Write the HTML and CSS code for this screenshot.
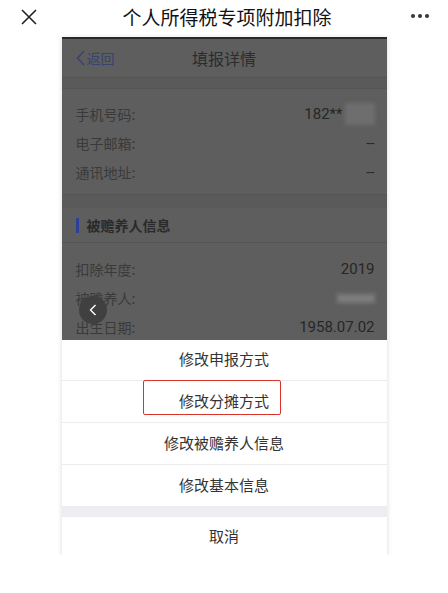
FILE: index.html
```html
<!doctype html>
<html lang="zh">
<head>
    <meta charset="UTF-8">
    <meta content="width=device-width, initial-scale=1" name="viewport">
    <title>个人所得税专项附加扣除</title>
    <link rel="stylesheet" href="styles.css">
</head>
<body>
<div class="topbar">
    <svg class="close-icon" width="16" height="16" viewBox="0 0 16 16">
        <path d="M1 1 L15 15 M15 1 L1 15" stroke="#222" stroke-width="1.6" fill="none"/>
    </svg>
    <div class="topbar-title">个人所得税专项附加扣除</div>
    <div class="more"><span></span><span></span><span></span></div>
</div>

<div class="shot">
    <div class="screen">
        <div class="nav">
            <div class="back">
                <svg width="9" height="16" viewBox="0 0 9 16">
                    <path d="M8 1 L1.5 8 L8 15" stroke="#37446f" stroke-width="1.6" fill="none"/>
                </svg>返回
            </div>
            <div class="nav-title">填报详情</div>
        </div>
        <div class="band"></div>
        <div class="rows first">
            <div class="row"><span>手机号码:</span><span class="val">182**<i class="blur phone"></i></span></div>
            <div class="row"><span>电子邮箱:</span><span class="val">--</span></div>
            <div class="row"><span>通讯地址:</span><span class="val">--</span></div>
        </div>
        <div class="gap"></div>
        <div class="section-head"><b class="mark"></b>被赡养人信息</div>
        <div class="rows">
            <div class="row"><span>扣除年度:</span><span class="val">2019</span></div>
            <div class="row"><span>被赡养人:</span><span class="val"><i class="blur name"></i></span></div>
            <div class="row"><span>出生日期:</span><span class="val">1958.07.02</span></div>
        </div>
        <div class="float-back">
            <svg width="8" height="12" viewBox="0 0 8 12">
                <path d="M6.5 1 L1.5 6 L6.5 11" stroke="#fff" stroke-width="1.4" fill="none"/>
            </svg>
        </div>
    </div>
    <div class="sheet">
        <div class="sheet-item">修改申报方式</div>
        <div class="sheet-item">修改分摊方式</div>
        <div class="sheet-item">修改被赡养人信息</div>
        <div class="sheet-item">修改基本信息</div>
        <div class="sheet-gap"></div>
        <div class="sheet-item cancel">取消</div>
        <div class="mark-box"></div>
    </div>
</div>
</body>
</html>
```

FILE: styles.css
```css
body {
    margin: 0;
    background: #fff;
    font-family: "Noto Sans CJK SC", "Noto Sans", sans-serif;
    color: #222;
}

.topbar {
    height: 37px;
    display: flex;
    align-items: center;
    justify-content: space-between;
    padding: 0 19px 0 21px;
    box-sizing: border-box;
}

.close-icon {
    margin-top: -3px;
}

.topbar-title {
    font-size: 19px;
    color: #111;
    margin-top: -5px;
    margin-left: 6px;
}

.more {
    display: flex;
    gap: 3px;
    margin-top: -5px;
}

.more span {
    width: 4px;
    height: 4px;
    border-radius: 50%;
    background: #333;
}

.shot {
    width: 325px;
    margin: 0 auto;
    box-shadow: 0 1px 5px rgba(0, 0, 0, 0.15);
}

.screen {
    position: relative;
    height: 303px;
    overflow: hidden;
    background: #5e5e5e;
    border-top: 2px solid #2a2a2a;
    box-sizing: border-box;
    color: #333;
    font-size: 14px;
}

.nav {
    height: 39px;
    display: flex;
    align-items: center;
    position: relative;
    border-bottom: 1px solid #545454;
    box-sizing: border-box;
}

.back {
    display: flex;
    align-items: center;
    gap: 2px;
    padding-left: 14px;
    color: #37446f;
    font-size: 14px;
}

.nav-title {
    position: absolute;
    left: 0;
    right: 0;
    text-align: center;
    font-size: 16px;
    color: #2c2c2c;
    pointer-events: none;
}

.band {
    height: 10px;
    background: #5a5a5a;
    border-bottom: 1px solid #555;
}

.rows {
    padding: 11px 12px 0 14px;
}

.rows.first {
    padding-top: 10px;
    padding-bottom: 8px;
}

.row {
    height: 29px;
    display: flex;
    align-items: center;
    justify-content: space-between;
    color: #3a3a3a;
}

.val {
    display: flex;
    align-items: center;
    color: #262626;
    font-family: "Roboto", "Noto Sans CJK SC", sans-serif;
    font-size: 15px;
}

.blur {
    display: block;
    background: #6e6e6e;
    filter: blur(2px);
}

.blur.phone {
    width: 30px;
    height: 22px;
    margin-left: 2px;
}

.blur.name {
    width: 38px;
    height: 9px;
    background: #7d7d7d;
    margin-top: 2px;
}

.gap {
    height: 13px;
    background: #5a5a5a;
    border-top: 1px solid #565656;
}

.section-head {
    height: 35px;
    display: flex;
    align-items: center;
    padding-left: 14px;
    box-sizing: border-box;
    font-weight: bold;
    font-size: 14px;
    color: #2a2a2a;
    border-bottom: 1px solid #545454;
}

.mark {
    width: 3px;
    height: 15px;
    background: #2f3e96;
    margin-right: 8px;
}

.float-back {
    position: absolute;
    left: 17px;
    top: 257px;
    width: 28px;
    height: 28px;
    border-radius: 50%;
    background: #404040;
    display: flex;
    align-items: center;
    justify-content: center;
}

.sheet {
    position: relative;
    background: #fff;
    font-size: 15px;
    color: #333;
}

.sheet-item {
    height: 42px;
    display: flex;
    align-items: center;
    justify-content: center;
    padding-bottom: 3px;
    border-bottom: 1px solid #ececec;
    box-sizing: border-box;
}

.sheet-item:first-child {
    height: 41px;
}

.sheet-gap {
    height: 10px;
    background: #eeeef2;
}

.sheet-item.cancel {
    height: 38px;
    padding-bottom: 1px;
    border-bottom: none;
}

.mark-box {
    position: absolute;
    left: 81px;
    top: 40px;
    width: 138px;
    height: 35px;
    border: 1.5px solid #d8342b;
    border-radius: 2px;
    box-sizing: border-box;
}
```
